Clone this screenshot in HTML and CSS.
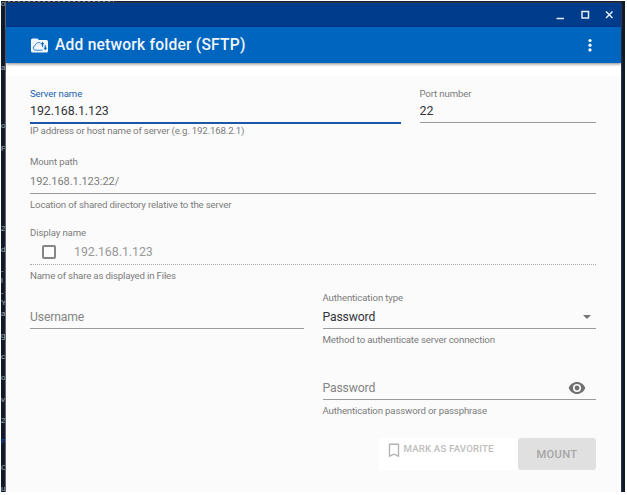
FILE: index.html
```
<!DOCTYPE html>
<html lang="en">
<head>
<meta charset="utf-8">
<title>Add network folder (SFTP)</title>
<link rel="stylesheet" href="styles.css">
</head>
<body>
<div class="desktop">
  <div class="terminal">
    <span class="row first">or</span>
    <span class="row second">a</span>
    <span class="row third">ot</span>
    <span class="row fourth">Pc</span>
    <span class="row fifth">2</span>
    <span class="row">de</span>
    <span class="row">-l</span>
    <span class="row">-Y</span>
    <span class="row">a</span>
    <span class="row">gl</span>
    <span class="row">c.</span>
    <span class="row">og</span>
    <span class="row">v</span>
    <span class="row">2</span>
    <span class="row prompt">P</span>
    <span class="row last">C</span>
    <span class="row">ul</span>
  </div>
  <main class="window">
    <div class="titlebar">
      <svg class="control" viewBox="0 0 10 10"><path d="M1.500 8.500h7.500"/></svg>
      <svg class="control" viewBox="0 0 10 10"><path d="M2 1.500h6.500v6.500H2z"/></svg>
      <svg class="control" viewBox="0 0 10 10"><path d="M2 1.500l6.500 6.500M8.500 1.500L2 8"/></svg>
    </div>
    <header class="toolbar">
      <svg class="folder" viewBox="0 0 17 15">
        <path class="sheet" d="M1.500 .5h5L8 2h7.500q1.500 0 1.500 1.500v9.500q0 1.500-1.500 1.500h-14Q0 14.500 0 13V2Q0 .5 1.500 .5z"/>
        <path class="cloud" d="M11.500 12.200H4.500a2.300 2.300 0 0 1-.6-4.500C4.800 5 7.500 3.800 9.700 5.200"/>
        <path class="arrows" d="M11.500 3.800L9.600 6.300h1.300V8.800h1.200V6.300h1.300zM14.300 12.300l1.900-2.500h-1.300V7.300h-1.200v2.500h-1.300z"/>
      </svg>
      <h1>Add network folder (SFTP)</h1>
      <svg class="more" viewBox="0 0 4 14"><circle cx="2" cy="2.500" r="1.600"/><circle cx="2" cy="7.200" r="1.600"/><circle cx="2" cy="11.900" r="1.600"/></svg>
    </header>
    <div class="band"></div>
    <form class="form">
      <div class="line server">
        <div class="field active">
          <label>Server name</label>
          <div class="value">192.168.1.123</div>
          <p>IP address or host name of server (e.g. 192.168.2.1)</p>
        </div>
        <div class="field">
          <label>Port number</label>
          <div class="value">22</div>
        </div>
      </div>
      <div class="field mount">
        <label>Mount path</label>
        <div class="value path">192.168.1.123:22/</div>
        <p>Location of shared directory relative to the server</p>
      </div>
      <div class="field display">
        <label>Display name</label>
        <div class="value disabled"><span class="checkbox"></span><span>192.168.1.123</span></div>
        <p>Name of share as displayed in Files</p>
      </div>
      <div class="line halves auth">
        <div class="field">
          <label></label>
          <div class="value placeholder">Username</div>
        </div>
        <div class="field">
          <label>Authentication type</label>
          <div class="value select">Password<span class="caret"></span></div>
          <p>Method to authenticate server connection</p>
        </div>
      </div>
      <div class="line halves">
        <div></div>
        <div class="field">
          <label></label>
          <div class="value placeholder secret">Password
            <svg class="eye" viewBox="0 0 18 14"><path d="M9 1C5.200 1 2 3.400.7 7 2 10.600 5.200 13 9 13s7-2.400 8.300-6C16 3.400 12.800 1 9 1zm0 10a4 4 0 1 1 0-8 4 4 0 0 1 0 8zm0-6.400a2.400 2.400 0 1 0 0 4.800 2.400 2.400 0 0 0 0-4.800z" fill-rule="evenodd"/></svg>
          </div>
          <p>Authentication password or passphrase</p>
        </div>
      </div>
      <div class="actions">
        <div class="favorite">
          <svg class="bookmark" viewBox="0 0 12 15"><path d="M1.500 1.200h9v12L6 11.200l-4.500 2z"/></svg>
          <span>MARK AS FAVORITE</span>
        </div>
        <div class="submit">MOUNT</div>
      </div>
    </form>
  </main>
</div>
</body>
</html>
```
FILE: styles.css
```
* { box-sizing: border-box; }
body { margin: 0; background: #fff; font-family: Roboto, sans-serif; overflow: hidden; }
.desktop {
  margin: 1px 0 0 1px; width: 624px; height: 491px;
  background:
    repeating-linear-gradient(90deg, #76828a 0 2px, #1b2938 2px 5px) 7px 0 / 106px 1px no-repeat,
    #111a2b;
  display: flex; overflow: hidden;
}
.terminal {
  width: 5px; flex: none; overflow: hidden; display: flex; flex-direction: column; align-items: flex-start;
  font: 8px/10px "Liberation Sans", sans-serif; color: #a9b0b4; border-right: 1px solid #59616a;
}
.row { height: 10px; flex: none; margin-bottom: 11.400px; }
.first { margin-top: -2px; }
.second { margin-top: 43px; }
.third { margin-top: 36px; }
.fourth { margin-top: 2px; }
.fifth { margin-top: 58px; }
.prompt { color: #0b50b8; }
.last { margin-top: 4px; }
.window {
  width: 615px; flex: none; margin-top: 2px; height: 489px; background: #fbfbfb;
  box-shadow: 0 0 2px #6d747d;
}
.titlebar {
  height: 24px; background: #003c8c; display: flex; justify-content: flex-end; align-items: center;
  gap: 14.500px; padding: 0 7px 0 0;
}
.control { width: 10px; height: 10px; fill: none; stroke: #e6edf6; stroke-width: 1.500; }
.toolbar {
  height: 36px; background: #0065bf; display: flex; align-items: center; padding: 0 29px 0 25px;
  box-shadow: 0 1px 3px rgba(0,0,0,.5); position: relative;
}
.folder { width: 17px; height: 15px; margin-right: 7px; }
.sheet { fill: #f2f7fc; }
.cloud { fill: none; stroke: #0065bf; stroke-width: .8; }
.arrows { fill: #0065bf; }
h1 { margin: 0; font-size: 15.600px; font-weight: 500; letter-spacing: .21px; color: #f0f6fc; flex: 1; white-space: nowrap; }
.more { width: 4px; height: 14px; fill: #fff; }
.band { height: 13px; background: #fff; }
.form { padding: 10px 25px 0 24px; }
.line { display: grid; }
.server { grid-template-columns: 371px 176px; column-gap: 18.500px; height: 69px; }
.halves { grid-template-columns: 274px 273px; column-gap: 19px; height: 71px; }
.halves > .field:last-child { margin-left: -.5px; }
.field { color: #7b7b7b; min-width: 0; white-space: nowrap; }
.field label { display: block; height: 14px; font-size: 9.600px; line-height: 14px; letter-spacing: -.12px; }
.server label { padding-top: 1px; }
.value {
  height: 23px; border-bottom: 1px solid #9b9b9b; display: flex; align-items: center;
  font-size: 12.400px; line-height: 20px; color: #33353a; letter-spacing: -.05px;
}
.field p { margin: 4px 0 0; font-size: 9.700px; line-height: 13px; letter-spacing: -.18px; }
.active label { color: #1b62ae; }
.active .value { height: 24px; border-bottom: 2px solid #1b56a7; }
.active p { margin-top: 0; }
.mount { height: 71px; }
.mount .value { height: 25px; padding-top: 2px; }
.path { font-size: 11px; color: #7b7b7b; }
.display { height: 65px; }
.value.disabled { color: #999; border-bottom: 1px dotted #aaa; height: 25px; }
.checkbox { width: 14px; height: 14px; border: 2px solid #858585; border-radius: 2px; margin: 0 18px 0 12px; }
.value.placeholder { color: #858585; }
.halves .value { height: 24px; padding-top: 1px; font-size: 12.200px; letter-spacing: -.14px; }
.select { justify-content: space-between; }
.caret { border: 4px solid transparent; border-top-color: #757575; border-bottom: 0; margin-right: 5px; }
.secret { justify-content: space-between; }
.eye { width: 18px; height: 14px; fill: #717171; margin-right: 10px; }
.actions { display: flex; justify-content: flex-end; height: 32px; margin-top: 5px; }
.favorite {
  width: 139px; background: #fff; display: flex; padding: 5px 0 0 9px; color: #bdbdbd;
  font-size: 9.700px; line-height: 12px; font-weight: 500; letter-spacing: .15px; white-space: nowrap;
}
.bookmark { width: 12px; height: 15px; margin-right: 3.500px; fill: none; stroke: #b3b3b3; stroke-width: 1.400; }
.submit {
  width: 78px; border-radius: 3px; background: #e0e0e0; color: #a6a6a6;
  display: flex; align-items: center; justify-content: center; font-size: 11.200px; font-weight: 500; letter-spacing: .3px;
}
```
